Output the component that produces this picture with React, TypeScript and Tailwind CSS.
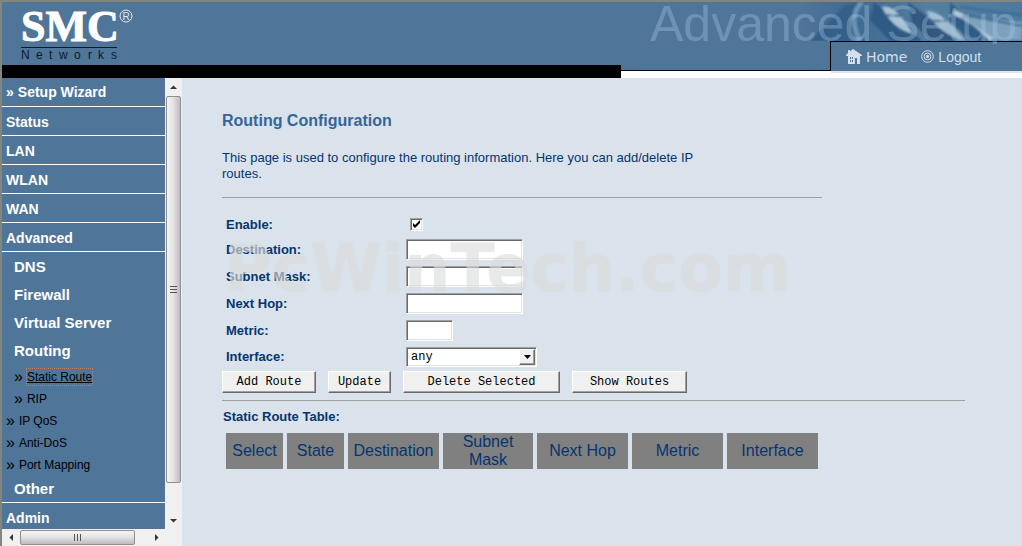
import { useState } from "react";
import clsx from "clsx";

const sections = ["Status", "LAN", "WLAN", "WAN", "Advanced"];
const groups = ["DNS", "Firewall", "Virtual Server", "Routing"];

const pages = [
  { name: "Static Route", nested: true },
  { name: "RIP", nested: true },
  { name: "IP QoS", nested: false },
  { name: "Anti-DoS", nested: false },
  { name: "Port Mapping", nested: false },
];

const columns = [
  { name: "Select", width: "w-[57px]" },
  { name: "State", width: "w-[57px]" },
  { name: "Destination", width: "w-[91px]" },
  { name: "Subnet Mask", width: "w-[90px]" },
  { name: "Next Hop", width: "w-[91px]" },
  { name: "Metric", width: "w-[91px]" },
  { name: "Interface", width: "w-[91px]" },
];

const sunken =
  "border border-t-[#a0a0a0] border-l-[#a0a0a0] border-b-white border-r-white bg-white shadow-[inset_1px_1px_#696969,inset_-1px_-1px_#e3e3e3]";
const raised =
  "border border-t-white border-l-white border-b-[#696969] border-r-[#696969] bg-[#f0f0f0] shadow-[inset_-1px_-1px_#a0a0a0]";

function Logo() {
  return (
    <svg
      width="120"
      height="60"
      viewBox="0 0 120 60"
      className="block overflow-visible"
      role="img"
      aria-label="SMC Networks"
    >
      <text
        x="0"
        y="37"
        fontFamily="Liberation Serif, serif"
        fontWeight="bold"
        fontSize="44"
        fill="#fff"
        stroke="#fff"
        strokeWidth="1"
      >
        SMC
      </text>
      <circle cx="105" cy="12" r="6" fill="none" stroke="#dfe8f1" />
      <text x="105" y="16" textAnchor="middle" fontFamily="Liberation Sans, sans-serif" fontSize="10" fill="#dfe8f1">
        R
      </text>
      <path d="M0 43.500H96" stroke="#0d1a26" />
      <text
        x="0 15 28 38 53 67 77 90"
        y="55"
        fontFamily="Liberation Sans, sans-serif"
        fontSize="12"
        fill="#0d1a26"
      >
        Networks
      </text>
    </svg>
  );
}

// Blurred photo strip behind the page title
function BannerArt() {
  return (
    <svg
      width="222"
      height="39"
      viewBox="0 0 222 39"
      preserveAspectRatio="none"
      className="absolute top-0 right-0"
      aria-hidden="true"
    >
      <defs>
        <linearGradient id="fade" x1="0" x2="1" y1="0" y2="0">
          <stop offset="0" stopColor="#4f7599" />
          <stop offset="0.25" stopColor="#3f6a92" />
          <stop offset="0.6" stopColor="#54809f" />
          <stop offset="1" stopColor="#4d799f" />
        </linearGradient>
        <filter id="soft">
          <feGaussianBlur stdDeviation="1.3" />
        </filter>
      </defs>
      <rect width="222" height="39" fill="url(#fade)" />
      <g filter="url(#soft)" fill="none">
        <path d="M10 39L44 4L62 0L50 39Z" fill="#355f88" />
        <path d="M60 39C52 24 52 10 62 0" stroke="#6c94b6" strokeWidth="5" />
        <path d="M74 0L122 39H90L70 18Z" fill="#2d5a84" />
        <path d="M82 5C92 2 102 14 113 32C98 28 88 18 82 5Z" fill="#a9c2d6" />
        <path d="M108 0L160 39H130L112 20Z" fill="#30597f" />
        <path d="M126 9C138 8 152 22 166 39C148 35 134 24 126 9Z" fill="#9fbbd1" />
        <path d="M150 0L192 39H172L150 20Z" fill="#2f5d87" />
        <path d="M154 10C166 15 180 24 192 38" stroke="#b3c9da" strokeWidth="5" />
        <path d="M160 14L222 20V38H196Z" fill="#7da2bf" />
        <path d="M160 5L222 13M164 13L222 24" stroke="#3d6b93" strokeWidth="2" />
        <path d="M84 13L102 14M128 19L146 19" stroke="#3c678d" strokeWidth="2" />
      </g>
    </svg>
  );
}

function Header() {
  return (
    <header className="flex h-[76px] shrink-0 overflow-hidden bg-[#4f7599]">
      <div className="flex w-[619px] shrink-0 flex-col">
        <div className="h-[63px] pt-0.5 pl-[19px]">
          <Logo />
        </div>
        <div className="h-[13px] bg-black" />
      </div>
      <div className="min-w-0 flex-1 bg-white">
        <div className="relative z-10 h-[39px] bg-[#4f7599]">
          <BannerArt />
          <h1 className="relative h-[42px] overflow-hidden pl-[29px] text-[50px] leading-[44px] whitespace-nowrap text-[#a9c8e4]/35">
            Advanced Setup
          </h1>
        </div>
        <div className="flex h-[30px]">
          <div className="flex-1 border-b border-black bg-[#4f7599]" />
          <nav className="flex w-[192px] items-center gap-3.5 border-t border-l border-black bg-[#4f7599] pl-[15px] text-sm text-[#d3e0ec]">
            <a href="#home" className="flex items-center gap-1 font-['DejaVu_Sans',sans-serif]">
              <svg width="16" height="15" viewBox="0 0 16 15" aria-hidden="true">
                <path d="M0 6L2 4V1H4V2.500L7 0L16 6V7H14V15H11V9H9V15H2V7H0Z" fill="#d3e0ec" />
                <path d="M4 8H5V10H4ZM6 8H7V10H6ZM4 11H5V13H4ZM6 11H7V13H6Z" fill="#4f7599" />
              </svg>
              Home
            </a>
            <a href="#logout" className="flex items-center gap-1">
              <svg width="13" height="13" viewBox="0 0 13 13" fill="none" stroke="#d3e0ec" aria-hidden="true">
                <circle cx="6.500" cy="6.500" r="5.800" />
                <circle cx="6.500" cy="6.500" r="3.400" />
                <circle cx="6.500" cy="6.500" r="1.200" fill="#d3e0ec" />
              </svg>
              Logout
            </a>
          </nav>
        </div>
        <div className="ml-auto h-0.5 w-[191px] bg-[#e2e5e9]" />
      </div>
    </header>
  );
}

function Arrow({ d }: { d: string }) {
  return (
    <svg width="7" height="7" viewBox="0 0 7 7" aria-hidden="true">
      <path d={d} fill="#333" />
    </svg>
  );
}

function VerticalScrollbar() {
  return (
    <div className="flex w-[17px] flex-col bg-[#f0f0f0]" aria-hidden="true">
      <div className="flex h-[18px] items-center justify-center">
        <Arrow d="M0 5L3.500 1.500L7 5Z" />
      </div>
      <div className="mx-px flex flex-[387] items-center justify-center rounded-xs border border-[#8f8f8f] bg-linear-to-r from-[#f5f5f5] via-[#e2e2e4] to-[#bcbcc0]">
        <svg width="7" height="8" viewBox="0 0 7 8">
          <path d="M0 0.500H7M0 3.500H7M0 6.500H7" stroke="#555" />
        </svg>
      </div>
      <div className="flex-[29]" />
      <div className="flex h-[17px] items-center justify-center">
        <Arrow d="M0 2L3.500 5.500L7 2Z" />
      </div>
    </div>
  );
}

function HorizontalScrollbar() {
  return (
    <div className="flex h-[17px] shrink-0 bg-[#f0f0f0] pr-[17px]" aria-hidden="true">
      <div className="flex w-[18px] items-center justify-center">
        <Arrow d="M5 0L1.500 3.500L5 7Z" />
      </div>
      <div className="my-px flex flex-[115] items-center justify-center rounded-xs border border-[#8f8f8f] bg-linear-to-b from-[#f5f5f5] via-[#e2e2e4] to-[#bcbcc0]">
        <svg width="8" height="7" viewBox="0 0 8 7">
          <path d="M0.500 0V7M3.500 0V7M6.500 0V7" stroke="#555" />
        </svg>
      </div>
      <div className="flex-[13]" />
      <div className="flex w-[17px] items-center justify-center">
        <Arrow d="M2 0L5.500 3.500L2 7Z" />
      </div>
    </div>
  );
}

function Sidebar() {
  return (
    <aside className="flex w-[180px] shrink-0 flex-col">
      <div className="flex min-h-0 flex-1">
        <nav className="flex-1 overflow-hidden bg-[#4f7599] font-bold text-white">
          <ul className="text-sm">
            <li className="flex h-[29px] items-center gap-1 border-b border-white pl-1">
              <span>»</span>
              <a href="#wizard">Setup Wizard</a>
            </li>
            {sections.map((name) => (
              <li key={name} className="flex h-[29px] items-center border-b border-white pt-0.5 pl-1">
                <a href={`#${name}`}>{name}</a>
              </li>
            ))}
          </ul>
          <ul className="pt-px pb-px text-[15px]">
            {groups.map((name) => (
              <li key={name} className="flex h-7 items-center pl-3">
                <a href={`#${name}`}>{name}</a>
              </li>
            ))}
          </ul>
          <ul className="text-xs font-normal text-black">
            {pages.map(({ name, nested }) => (
              <li key={name} className={clsx("flex h-[22px] items-center gap-1", nested ? "pl-3" : "pl-1")}>
                <span className="text-base leading-4">»</span>
                <a
                  href={`#${name}`}
                  className={clsx(name === "Static Route" && "underline outline-1 outline-dotted outline-[#c08060]")}
                >
                  {name}
                </a>
              </li>
            ))}
          </ul>
          <div className="flex h-[27px] items-center border-b border-white pl-3 text-[15px]">
            <a href="#other">Other</a>
          </div>
          <div className="flex h-[29px] items-center pl-1 text-sm">
            <a href="#admin">Admin</a>
          </div>
        </nav>
        <VerticalScrollbar />
      </div>
      <HorizontalScrollbar />
    </aside>
  );
}

function TextRow({ id, label, width }: { id: string; label: string; width: string }) {
  return (
    <div className="flex h-[27px] items-center">
      <label htmlFor={id} className="w-[180px]">
        {label}
      </label>
      <input id={id} type="text" className={clsx("h-[21px] px-1 font-normal outline-none", width, sunken)} />
    </div>
  );
}

function RouteForm() {
  const [enabled, setEnabled] = useState(true);

  return (
    <form onSubmit={(e) => e.preventDefault()}>
      <div className="relative pt-[15px] pl-1 text-[13px] font-bold">
        <div className="flex h-[23px] items-center">
          <label htmlFor="enable" className="w-[180px]">
            Enable:
          </label>
          <div className="relative ml-1 size-[13px]">
            <input
              id="enable"
              type="checkbox"
              checked={enabled}
              onChange={(e) => setEnabled(e.target.checked)}
              className={clsx("block size-[13px] appearance-none", sunken)}
            />
            {enabled && (
              <svg
                width="13"
                height="13"
                viewBox="0 0 13 13"
                className="pointer-events-none absolute inset-0"
                aria-hidden="true"
              >
                <path d="M3 5V8L5 10L10 5V2L5 7Z" fill="#000" />
              </svg>
            )}
          </div>
        </div>
        <TextRow id="destination" label="Destination:" width="w-[117px]" />
        <TextRow id="mask" label="Subnet Mask:" width="w-[117px]" />
        <TextRow id="hop" label="Next Hop:" width="w-[117px]" />
        <TextRow id="metric" label="Metric:" width="w-[47px]" />
        <div className="flex h-[25px] items-center">
          <label htmlFor="interface" className="w-[180px]">
            Interface:
          </label>
          <div className="relative w-[131px]">
            <select
              id="interface"
              className={clsx(
                "block h-5 w-full appearance-none px-1 font-['Liberation_Mono',monospace] text-xs font-normal text-black outline-none",
                sunken,
              )}
            >
              <option>any</option>
            </select>
            <span
              className={clsx(
                "pointer-events-none absolute top-0.5 right-0.5 flex h-4 w-4 items-center justify-center",
                raised,
              )}
            >
              <svg width="7" height="4" viewBox="0 0 7 4" aria-hidden="true">
                <path d="M0 0H7L3.500 4Z" fill="#000" />
              </svg>
            </span>
          </div>
        </div>
        <div
          className="pointer-events-none absolute top-[26px] left-0.5 font-['DejaVu_Sans',sans-serif] text-[65px] leading-[90px] font-bold whitespace-nowrap text-[#dedede]/55 [text-shadow:0_0_1px_#c4c8cc30]"
          aria-hidden="true"
        >
          PcWinTech.com
        </div>
      </div>
      <div className="flex gap-3 pt-0.5 font-['Liberation_Mono',monospace] text-xs text-black">
        <button type="submit" className={clsx("h-[22px] w-[94px]", raised)}>
          Add Route
        </button>
        <button type="button" className={clsx("h-[22px] w-[63px]", raised)}>
          Update
        </button>
        <button type="button" className={clsx("h-[22px] w-[157px]", raised)}>
          Delete Selected
        </button>
        <button type="button" className={clsx("h-[22px] w-[115px]", raised)}>
          Show Routes
        </button>
      </div>
    </form>
  );
}

export default function App() {
  return (
    <div className="flex h-screen flex-col border-t-2 border-l-2 border-[#85857f] bg-[#dae2eb] font-['Liberation_Sans',Arial,sans-serif]">
      <Header />
      <div className="flex min-h-0 flex-1">
        <Sidebar />
        <main className="min-w-0 flex-1 overflow-hidden pt-[31px] pl-10 text-[#053570]">
          <h2 className="text-base leading-6 font-bold text-[#336699]">Routing Configuration</h2>
          <p className="max-w-[490px] pt-[17px] pb-[15px] text-[13px] leading-4">
            This page is used to configure the routing information. Here you can add/delete IP routes.
          </p>
          <hr className="max-w-[600px] border-[#a0a0a0]" />
          <RouteForm />
          <hr className="mt-[7px] max-w-[743px] border-[#a0a0a0]" />
          <h3 className="pt-1.5 pl-px text-[13px] leading-5 font-bold">Static Route Table:</h3>
          <table className="mt-0.5 border-separate border-spacing-1 text-base leading-[18px]">
            <thead>
              <tr>
                {columns.map(({ name, width }) => (
                  <th key={name} className={clsx("h-9 bg-[#808080] p-0 font-normal", width)}>
                    {name}
                  </th>
                ))}
              </tr>
            </thead>
          </table>
        </main>
      </div>
    </div>
  );
}
